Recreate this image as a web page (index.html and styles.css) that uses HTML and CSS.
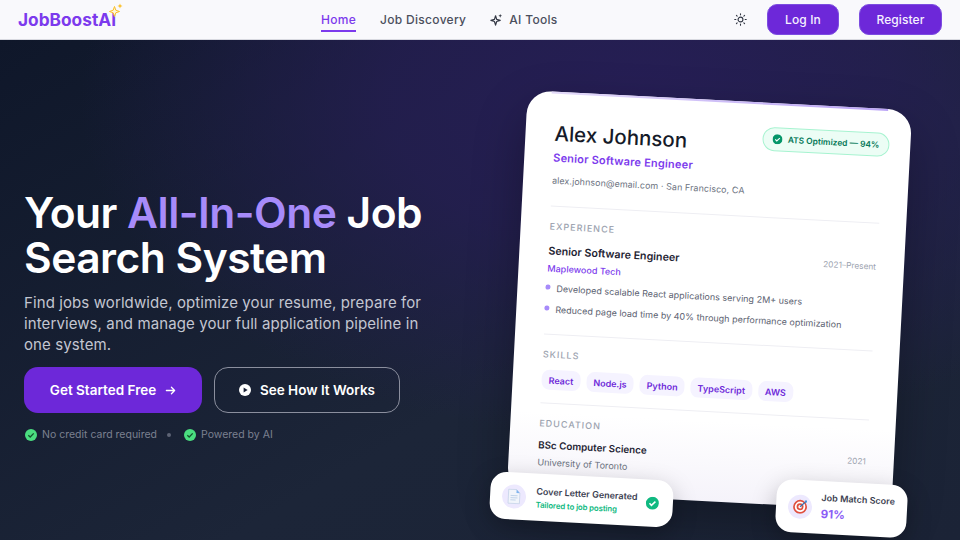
FILE: index.html
```html
<!DOCTYPE html>
<html lang="en">
<head>
  <meta charset="UTF-8">
  <meta name="viewport" content="width=device-width, initial-scale=1.0">
  <title>JobBoostAI</title>
  <link rel="stylesheet" href="styles.css">
</head>
<body>
  <header class="navbar">
    <a class="logo" href="#">JobBoostAI
      <svg class="logo-spark" viewBox="0 0 14 14" width="14" height="14"><path d="M5.5 3.5 6.8 7.2 10.5 8.5 6.8 9.8 5.5 13.5 4.2 9.8.5 8.5 4.2 7.2Z" fill="#fff6d8" stroke="#fbbf24" stroke-width="1"/><path d="M11 .5 11.7 2.3 13.5 3 11.7 3.7 11 5.500 10.300 3.700 8.500 3 10.300 2.300Z" fill="#fbbf24"/></svg>
    </a>
    <nav class="nav-links">
      <a class="nav-link active" href="#">Home</a>
      <a class="nav-link" href="#">Job Discovery</a>
      <a class="nav-link" href="#">
        <svg viewBox="0 0 14 14" width="13" height="13"><path d="M6 3 7.200 6.800 11 8 7.200 9.200 6 13 4.800 9.200 1 8 4.800 6.800Z" fill="none" stroke="#333844" stroke-width="1.300" stroke-linejoin="round"/><path d="M11 1 11.600 2.400 13 3 11.600 3.600 11 5 10.400 3.600 9 3 10.400 2.400Z" fill="#333844"/></svg>
        AI Tools
      </a>
    </nav>
    <div class="nav-actions">
      <svg class="sun" viewBox="0 0 14 14" width="13" height="13" fill="none" stroke="#333844" stroke-width="1.200" stroke-linecap="round"><circle cx="7" cy="7" r="2.600"/><path d="M7 .8v1.200M7 12v1.200M.8 7H2M12 7h1.200M2.600 2.600l.8.8M10.600 10.600l.8.8M2.600 11.400l.8-.8M10.600 3.400l.8-.8"/></svg>
      <a class="nav-btn login" href="#">Log In</a>
      <a class="nav-btn register" href="#">Register</a>
    </div>
  </header>

  <main class="hero">
    <section class="hero-copy">
      <h1>Your <span>All-In-One</span> Job Search System</h1>
      <p class="lead">Find jobs worldwide, optimize your resume, prepare for interviews, and manage your full application pipeline in one system.</p>
      <div class="cta-row">
        <a class="cta primary" href="#">Get Started Free
          <svg viewBox="0 0 12 12" width="11" height="11" fill="none" stroke="#fff" stroke-width="1.400" stroke-linecap="round" stroke-linejoin="round"><path d="M1.500 6h9M7 2.500 10.500 6 7 9.500"/></svg>
        </a>
        <a class="cta outline" href="#">
          <svg viewBox="0 0 12 12" width="12" height="12"><circle cx="6" cy="6" r="6" fill="#fff"/><path d="M4.600 3.400 8.600 6 4.600 8.600Z" fill="#1a2136"/></svg>
          See How It Works
        </a>
      </div>
      <div class="trust-row">
        <span class="trust"><svg viewBox="0 0 12 12" width="12" height="12"><circle cx="6" cy="6" r="6" fill="#4ade80"/><path d="M3.300 6.200 5.200 8 8.700 4.400" fill="none" stroke="#14532d" stroke-width="1.300"/></svg>No credit card required</span>
        <span class="trust-dot"></span>
        <span class="trust"><svg viewBox="0 0 12 12" width="12" height="12"><circle cx="6" cy="6" r="6" fill="#4ade80"/><path d="M3.300 6.200 5.200 8 8.700 4.400" fill="none" stroke="#14532d" stroke-width="1.300"/></svg>Powered by AI</span>
      </div>
    </section>

    <section class="hero-visual">
      <article class="resume">
        <div class="resume-head">
          <div>
            <h2>Alex Johnson</h2>
            <div class="role">Senior Software Engineer</div>
            <div class="contact">alex.johnson@email.com · San Francisco, CA</div>
          </div>
          <div class="ats">
            <svg viewBox="0 0 12 12" width="10" height="10"><circle cx="6" cy="6" r="6" fill="#059669"/><path d="M3.300 6.200 5.200 8 8.700 4.400" fill="none" stroke="#fff" stroke-width="1.400"/></svg>
            ATS Optimized — 94%
          </div>
        </div>

        <div class="resume-section">
          <h3>Experience</h3>
          <div class="entry">
            <div>
              <div class="entry-title">Senior Software Engineer</div>
              <div class="company">Maplewood Tech</div>
            </div>
            <div class="date">2021–Present</div>
          </div>
          <ul>
            <li>Developed scalable React applications serving 2M+ users</li>
            <li>Reduced page load time by 40% through performance optimization</li>
          </ul>
        </div>

        <div class="resume-section skills-section">
          <h3>Skills</h3>
          <div class="skills">
            <span>React</span><span>Node.js</span><span>Python</span><span>TypeScript</span><span>AWS</span>
          </div>
        </div>

        <div class="resume-section">
          <h3>Education</h3>
          <div class="entry edu">
            <div>
              <div class="entry-title">BSc Computer Science</div>
              <div class="school">University of Toronto</div>
            </div>
            <div class="date">2021</div>
          </div>
        </div>
      </article>

      <div class="float-card cover">
        <div class="float-icon">
          <svg viewBox="0 0 16 18" width="14" height="16"><path d="M1.500 1h9l4 4v12h-13Z" fill="#f1f5fb" stroke="#c9d6ea"/><path d="M10.500 1v4h4Z" fill="#7fb4ee"/><path d="M4 8h8M4 10.500h8M4 13h6" stroke="#bcd0e8" stroke-width="1"/></svg>
        </div>
        <div class="float-text">
          <div class="float-title">Cover Letter Generated</div>
          <div class="float-sub">Tailored to job posting</div>
        </div>
        <svg class="float-check" viewBox="0 0 12 12" width="13" height="13"><circle cx="6" cy="6" r="6" fill="#10b981"/><path d="M3.300 6.200 5.200 8 8.700 4.400" fill="none" stroke="#fff" stroke-width="1.400"/></svg>
      </div>

      <div class="float-card score">
        <div class="float-icon">
          <svg viewBox="0 0 16 16" width="15" height="15"><circle cx="7.500" cy="8.500" r="6.500" fill="#fff" stroke="#e0503f" stroke-width="1.800"/><circle cx="7.500" cy="8.500" r="3.700" fill="#e0503f"/><circle cx="7.500" cy="8.500" r="1.800" fill="#fff"/><path d="M7.500 8.500 13.500 2.500" stroke="#3a6fb0" stroke-width="1.300"/><path d="M12 1.500h2.500V4Z" fill="#3a8fd8"/></svg>
        </div>
        <div class="float-text">
          <div class="float-title">Job Match Score</div>
          <div class="float-value">91%</div>
        </div>
      </div>
    </section>
  </main>
</body>
</html>
```

FILE: styles.css
```css
* {
  box-sizing: border-box;
  margin: 0;
  padding: 0;
}

html,
body {
  height: 100%;
  overflow: hidden;
}

body {
  font-family: Inter, "Noto Sans", sans-serif;
  background-color: #131b2e;
}

a {
  text-decoration: none;
}

.navbar {
  height: 40px;
  display: flex;
  align-items: center;
  justify-content: space-between;
  padding: 0 18px;
  background: #f9f9fc;
  border-bottom: 1px solid #d8d9e0;
  position: relative;
}

.logo {
  font-size: 17.3px;
  font-weight: 700;
  color: #7c3aed;
  position: relative;
}

.logo-spark {
  position: absolute;
  left: 91px;
  top: -6px;
}

.nav-links {
  position: absolute;
  left: 321px;
  top: 0;
  height: 39px;
  display: flex;
  align-items: center;
  gap: 24px;
}

.nav-link {
  display: flex;
  align-items: center;
  gap: 6px;
  height: 24px;
  margin-top: 1px;
  font-size: 12px;
  font-weight: 500;
  letter-spacing: 0.3px;
  color: #4b4f5c;
  border-bottom: 2px solid transparent;
}

.nav-link.active {
  color: #7c3aed;
  border-bottom-color: #7c3aed;
}

.nav-actions {
  display: flex;
  align-items: center;
}

.sun {
  margin-right: 20px;
}

.nav-btn {
  height: 31px;
  display: flex;
  align-items: center;
  justify-content: center;
  font-size: 12px;
  font-weight: 500;
  letter-spacing: 0.1px;
  color: #f5f1ff;
  background-color: #6d28d9;
  border: 1px solid #7c4de0;
  border-radius: 10px;
}

.login {
  width: 72px;
  margin-right: 20px;
}

.register {
  width: 83px;
}

.hero {
  height: 500px;
  display: flex;
  overflow: hidden;
  position: relative;
  background:
    radial-gradient(ellipse 560px 340px at 640px 60px, #261e55 0%, rgba(38, 30, 85, 0.75) 45%, rgba(38, 30, 85, 0) 100%),
    linear-gradient(150deg, #0f172a 0%, #1c2538 60%, #1b2336 100%);
}

.hero-copy {
  width: 470px;
  padding: 150px 0 0 24px;
}

h1 {
  font-size: 42.5px;
  font-weight: 600;
  line-height: 45px;
  letter-spacing: -0.5px;
  color: #ffffff;
}

h1 span {
  color: #a78bfa;
}

.lead {
  margin-top: 12px;
  width: 410px;
  font-size: 15px;
  line-height: 21px;
  letter-spacing: 0.1px;
  color: #c3c6d1;
}

.cta-row {
  display: flex;
  gap: 12px;
  margin-top: 12px;
}

.cta {
  height: 46px;
  display: flex;
  align-items: center;
  justify-content: center;
  gap: 9px;
  font-size: 13.5px;
  font-weight: 600;
  color: #ffffff;
  border-radius: 14px;
}

.primary {
  width: 178px;
  background-color: #6d28d9;
}

.outline {
  width: 186px;
  border: 1px solid #8b8f9e;
}

.trust-row {
  display: flex;
  align-items: center;
  margin-top: 15px;
  padding-left: 1px;
  font-size: 10.5px;
  color: #7b8090;
}

.trust {
  display: flex;
  align-items: center;
  gap: 5px;
}

.trust-dot {
  width: 4px;
  height: 4px;
  margin: 0 13px 0 10px;
  border-radius: 50%;
  background: #5e6475;
}

.hero-visual {
  flex: 1;
  position: relative;
}

.resume {
  position: absolute;
  left: 47px;
  top: 60px;
  width: 385px;
  height: 401px;
  padding: 29px 27px 0 29px;
  background: linear-gradient(180deg, #ffffff 80%, #f5f3fa 100%);
  border-radius: 24px;
  transform: rotate(3deg);
  box-shadow: 0 20px 50px rgba(0, 0, 0, 0.3);
}

.resume::before {
  content: "";
  position: absolute;
  left: 24px;
  right: 24px;
  top: 0;
  height: 2px;
  background: linear-gradient(90deg, #e3daf9, #b9a2f5);
}

.resume-head {
  display: flex;
  justify-content: space-between;
  align-items: flex-start;
  padding-bottom: 20px;
}

h2 {
  font-size: 20.5px;
  font-weight: 500;
  line-height: 26px;
  color: #151a28;
}

.role {
  margin-top: 4px;
  font-size: 11px;
  font-weight: 600;
  letter-spacing: 0.2px;
  color: #7c3aed;
}

.contact {
  margin-top: 10px;
  font-size: 8.9px;
  color: #6b7280;
  letter-spacing: 0.1px;
  white-space: nowrap;
}

.ats {
  display: flex;
  align-items: center;
  gap: 5px;
  height: 24px;
  margin: -5px -6px 0 0;
  padding: 0 9px;
  font-size: 8.4px;
  font-weight: 600;
  color: #047857;
  background: #ecfdf5;
  border: 1px solid #a7f3d0;
  border-radius: 13px;
  white-space: nowrap;
}

.resume-section {
  padding: 14px 1px 10px 0;
  border-top: 1px solid #eeeef3;
}

.skills-section {
  padding-bottom: 13px;
}

h3 {
  font-size: 9px;
  font-weight: 500;
  letter-spacing: 1px;
  text-transform: uppercase;
  color: #9ca3af;
}

.entry {
  display: flex;
  justify-content: space-between;
  align-items: flex-start;
  margin-top: 13px;
}

.entry-title {
  font-size: 10.7px;
  font-weight: 600;
  color: #1f2433;
}

.entry.edu {
  margin-top: 11px;
}

.edu .entry-title {
  font-size: 9.800px;
}

.company {
  margin-top: 5px;
  font-size: 9px;
  font-weight: 500;
  color: #7c3aed;
}

.school {
  margin-top: 6px;
  font-size: 9.100px;
  color: #6b7280;
}

.date {
  font-size: 8.300px;
  color: #9ca3af;
}

ul {
  list-style: none;
  margin-top: 8px;
}

li {
  position: relative;
  padding-left: 10px;
  margin-bottom: 7px;
  font-size: 9px;
  line-height: 14px;
  color: #5b6170;
  white-space: nowrap;
}

li::before {
  content: "";
  position: absolute;
  left: -1px;
  top: 3px;
  width: 5px;
  height: 5px;
  border-radius: 50%;
  background: #a78bfa;
}

.skills {
  display: flex;
  gap: 6px;
  margin-top: 10px;
}

.skills span {
  height: 20px;
  display: flex;
  align-items: center;
  padding: 0 7px;
  font-size: 9px;
  font-weight: 600;
  color: #6d28d9;
  background: #f5f3ff;
  border-radius: 8px;
}

.float-card {
  position: absolute;
  display: flex;
  align-items: center;
  background: #ffffff;
  border-radius: 16px;
  box-shadow: 0 8px 24px rgba(0, 0, 0, 0.25);
  transform: rotate(3deg);
}

.cover {
  left: 20px;
  top: 436px;
  width: 183px;
  height: 47px;
  padding: 0 14px 0 12px;
}

.score {
  left: 306px;
  top: 442px;
  width: 131px;
  height: 53px;
  padding: 0 12px;
}

.score .float-icon {
  margin-right: 9px;
}

.score .float-text {
  padding-bottom: 3px;
}

.float-icon {
  width: 24px;
  height: 24px;
  margin-right: 10px;
  flex-shrink: 0;
  display: flex;
  align-items: center;
  justify-content: center;
  border-radius: 50%;
  background: #ede9fe;
}

.float-text {
  flex: 1;
}

.float-title {
  font-size: 9px;
  font-weight: 600;
  color: #3b4050;
  white-space: nowrap;
}

.float-sub {
  margin-top: 3px;
  font-size: 7.8px;
  font-weight: 600;
  letter-spacing: -0.1px;
  color: #10b981;
  white-space: nowrap;
}

.float-value {
  margin-top: 4px;
  font-size: 11.5px;
  font-weight: 700;
  color: #8b5cf6;
}
```
